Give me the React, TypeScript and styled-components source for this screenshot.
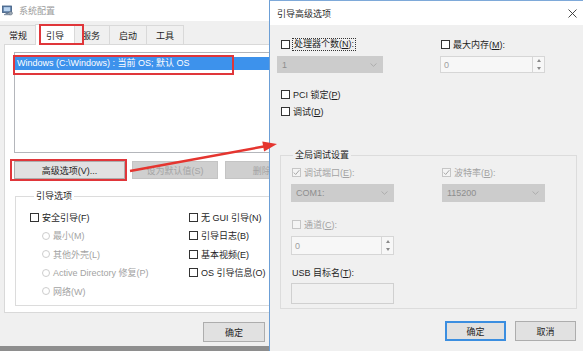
import styled, { createGlobalStyle } from "styled-components";

//Global
const GlobalStyle = createGlobalStyle`
  *, *::before, *::after { box-sizing: border-box; }
  html, body { margin: 0; padding: 0; }
  body {
    font-family: "Liberation Sans", "Noto Sans CJK SC", sans-serif;
    font-size: 9px;
    color: #1e1e1e;
  }
`;

//Desktop
const Desktop = styled.div`
  position: relative;
  width: 583px;
  height: 351px;
  overflow: hidden;
  background: #8e8e8e;
`;

//Main window
const MainWindow = styled.section`
  position: absolute;
  left: 0;
  top: 0;
  width: 484px;
  height: 346px;
  display: flex;
  flex-direction: column;
  background: #f0f0f0;
`;

const TitleBar = styled.header`
  height: 21px;
  display: flex;
  align-items: center;
  gap: 6px;
  padding-left: 2px;
  background: #fff;
  color: #9b9b9b;
`;

const TabStrip = styled.div`
  position: relative;
  z-index: 1;
  height: 23px;
  display: flex;
  align-items: flex-end;
  padding-left: 0;
`;

const Tab = styled.div<{ $active?: boolean }>`
  position: relative;
  height: ${(p) => (p.$active ? 21 : 19)}px;
  margin: 0 ${(p) => (p.$active ? -2 : 0)}px ${(p) => (p.$active ? -1 : 0)}px ${(p) => (p.$active ? -2 : -1)}px;
  padding: 0 ${(p) => (p.$active ? 10 : 9)}px;
  z-index: ${(p) => (p.$active ? 1 : 0)};
  display: flex;
  align-items: center;
  background: ${(p) => (p.$active ? "#fff" : "#f0f0f0")};
  border: 1px solid #d9d9d9;
  border-bottom: none;
`;

const TabPanel = styled.div`
  flex: 1;
  margin: 0 4px;
  padding: 7px 9px 0;
  display: flex;
  flex-direction: column;
  background: #fff;
  border: 1px solid #d9d9d9;
`;

const ListBox = styled.div`
  height: 101px;
  padding-top: 4px;
  border: 1px solid #b4b6bb;
  background: #fff;
`;

const ListItem = styled.div`
  position: relative;
  height: 13px;
  padding-left: 2px;
  line-height: 13px;
  color: #fff;
  background: #3d92ec;
`;

const Mark = styled.span<{ $t: number; $r: number; $b: number; $l: number }>`
  position: absolute;
  top: ${(p) => p.$t}px;
  right: ${(p) => p.$r}px;
  bottom: ${(p) => p.$b}px;
  left: ${(p) => p.$l}px;
  border: 2px solid #e0363a;
  pointer-events: none;
`;

const ButtonRow = styled.div`
  display: flex;
  gap: 7px;
  margin-top: 8px;
`;

const Button = styled.div<{ $w: number; $primary?: boolean; $disabled?: boolean }>`
  position: relative;
  width: ${(p) => p.$w}px;
  height: ${(p) => (p.$primary !== undefined ? 20 : 18)}px;
  flex: none;
  display: flex;
  align-items: center;
  justify-content: center;
  background: ${(p) => (p.$disabled ? "#cfcfcf" : "#e1e1e1")};
  border: ${(p) => (p.$primary ? "2px solid #3b8ee0" : p.$disabled ? "1px solid #c4c4c4" : "1px solid #adadad")};
  color: ${(p) => (p.$disabled ? "#a4a4a4" : "#1e1e1e")};
`;

const GroupBox = styled.fieldset<{ $mt: number; $ml: number; $w?: number; $pl: number; $pt: number }>`
  margin: ${(p) => p.$mt}px 0 0 ${(p) => p.$ml}px;
  width: ${(p) => (p.$w ? `${p.$w}px` : "auto")};
  min-width: 0;
  padding: ${(p) => p.$pt}px 0 4px ${(p) => p.$pl}px;
  border: 1px solid #dcdcdc;
`;

const Legend = styled.legend<{ $ml: number }>`
  margin-left: ${(p) => p.$ml}px;
  padding: 0 2px;
  line-height: 11px;
  color: #1e1e1e;
`;

const OptionGrid = styled.div`
  display: grid;
  grid-template-columns: 159px 1fr;
  grid-auto-rows: 18.5px;
  align-items: center;
`;

const Option = styled.label<{ $indent?: number; $disabled?: boolean; $mt?: number }>`
  height: 12px;
  margin-top: ${(p) => p.$mt ?? 0}px;
  padding-left: ${(p) => p.$indent ?? 0}px;
  display: flex;
  align-items: center;
  gap: 3px;
  white-space: nowrap;
  color: ${(p) => (p.$disabled ? "#a3a3a3" : "#1e1e1e")};
`;

const CheckBox = styled.span<{ $disabled?: boolean }>`
  width: 9px;
  height: 9px;
  flex: none;
  display: flex;
  align-items: center;
  justify-content: center;
  border: 1px solid ${(p) => (p.$disabled ? "#c6c6c6" : "#333")};
  background: ${(p) => (p.$disabled ? "#f4f4f4" : "#fff")};
`;

const Radio = styled.span`
  width: 8px;
  height: 8px;
  flex: none;
  border: 1px solid #cdcdcd;
  border-radius: 50%;
  background: #fff;
`;

const Footer = styled.footer`
  height: 33px;
  display: flex;
  justify-content: flex-end;
  gap: 7px;
  padding: 9px 12px 0 0;
`;

//Dialog
const Dialog = styled.section`
  position: absolute;
  z-index: 2;
  left: 269px;
  top: 0;
  width: 319px;
  height: 351px;
  display: flex;
  flex-direction: column;
  background: #f0f0f0;
  border-top: 1px solid #7ea9d9;
  border-left: 1px solid #6c9fd6;
`;

const DialogTitle = styled.header`
  height: 24px;
  flex: none;
  display: flex;
  align-items: center;
  justify-content: space-between;
  padding: 0 11px 0 7px;
  background: #fff;
  color: #2a2a2a;
`;

const DialogBody = styled.div`
  display: flex;
  flex-direction: column;
  padding-left: 7px;
`;

const PairRow = styled.div<{ $mt: number; $col: number }>`
  display: grid;
  grid-template-columns: ${(p) => p.$col}px 1fr;
  align-items: center;
  margin-top: ${(p) => p.$mt}px;
`;

const FocusText = styled.span`
  padding: 0 1px;
  outline: 1px dotted #333;
  line-height: 11px;
`;

const Select = styled.div<{ $w: number; $h: number; $mt?: number }>`
  width: ${(p) => p.$w}px;
  height: ${(p) => p.$h}px;
  margin-top: ${(p) => p.$mt ?? 0}px;
  display: flex;
  align-items: center;
  justify-content: space-between;
  padding: 0 5px 0 4px;
  background: #cccccc;
  border: 1px solid #cccccc;
  color: #8e8e8e;
`;

const SpinBox = styled.div<{ $w: number; $h: number; $mt?: number }>`
  width: ${(p) => p.$w}px;
  height: ${(p) => p.$h}px;
  margin-top: ${(p) => p.$mt ?? 0}px;
  display: flex;
  background: #f7f7f7;
  border: 1px solid #d6d6d6;
  color: #a0a0a0;
`;

const SpinValue = styled.span`
  flex: 1;
  display: flex;
  align-items: center;
  padding-left: 3px;
`;

const SpinArrows = styled.span`
  width: 12px;
  display: flex;
  flex-direction: column;
  border-left: 1px solid #d6d6d6;
`;

const SpinArrow = styled.span`
  flex: 1;
  display: flex;
  align-items: center;
  justify-content: center;
`;

const FieldLabel = styled.div<{ $mt: number }>`
  height: 12px;
  margin-top: ${(p) => p.$mt}px;
  padding-left: 1px;
  line-height: 12px;
  white-space: nowrap;
`;

const TextBox = styled.div<{ $w: number; $h: number; $mt: number }>`
  width: ${(p) => p.$w}px;
  height: ${(p) => p.$h}px;
  margin-top: ${(p) => p.$mt}px;
  background: #f0f0f0;
  border: 1px solid #d0d0d0;
`;

const DialogFooter = styled.footer`
  display: flex;
  justify-content: flex-end;
  gap: 9px;
  margin-top: 12px;
  padding-right: 12px;
`;

//Annotation
const Overlay = styled.svg`
  position: absolute;
  z-index: 5;
  left: 0;
  top: 0;
  pointer-events: none;
`;

const Key = styled.u`
  text-underline-offset: 1px;
`;

const Check = () => (
  <svg width="7" height="7" viewBox="0 0 7 7">
    <path d="M0.8 3.6 L2.7 5.5 L6.3 1.2" fill="none" stroke="#a6a6a6" strokeWidth="1" />
  </svg>
);

const Chevron = () => (
  <svg width="7" height="4" viewBox="0 0 7 4">
    <path d="M0.5 0.5 L3.5 3.3 L6.5 0.5" fill="none" stroke="#a9a9a9" strokeWidth="0.9" />
  </svg>
);

const Spinner = () => (
  <SpinArrows>
    <SpinArrow>
      <svg width="4" height="3" viewBox="0 0 4 3"><path d="M0 3 L2 0 L4 3 Z" fill="#8a8a8a" /></svg>
    </SpinArrow>
    <SpinArrow>
      <svg width="4" height="3" viewBox="0 0 4 3"><path d="M0 0 L2 3 L4 0 Z" fill="#8a8a8a" /></svg>
    </SpinArrow>
  </SpinArrows>
);

const AppIcon = () => (
  <svg width="11" height="11" viewBox="0 0 11 11">
    <rect x="0.5" y="1" width="9" height="6.5" fill="#5c7ea6" stroke="#3c5a80" strokeWidth="0.8" />
    <rect x="1.8" y="2.2" width="6.4" height="4" fill="#b9d3ef" />
    <rect x="3.5" y="7.5" width="3" height="1.5" fill="#6b7f95" />
    <rect x="2" y="9" width="6" height="1.2" fill="#8594a6" />
    <circle cx="8.6" cy="8.2" r="1.8" fill="#9aa7b5" stroke="#66727f" strokeWidth="0.6" />
  </svg>
);

const CloseIcon = () => (
  <svg width="9" height="9" viewBox="0 0 9 9">
    <path d="M0.5 0.5 L8.5 8.5 M8.5 0.5 L0.5 8.5" stroke="#333" strokeWidth="0.9" />
  </svg>
);

const App = () => {
  return (
    <>
      <GlobalStyle />
      <Desktop>
        <MainWindow>
          <TitleBar>
            <AppIcon />
            <span>系统配置</span>
          </TitleBar>
          <TabStrip>
            <Tab>常规</Tab>
            <Tab $active>
              引导
              <Mark $t={-1} $r={-10} $b={0} $l={3} />
            </Tab>
            <Tab>服务</Tab>
            <Tab>启动</Tab>
            <Tab>工具</Tab>
          </TabStrip>
          <TabPanel>
            <ListBox>
              <ListItem>
                Windows (C:\Windows) : 当前 OS; 默认 OS
                <Mark $t={-2} $r={235} $b={-5} $l={-2} />
              </ListItem>
            </ListBox>
            <ButtonRow>
              <Button $w={111}>
                高级选项(V)...
                <Mark $t={-3} $r={-3} $b={-3} $l={-5} />
              </Button>
              <Button $w={86} $disabled>设为默认值(S)</Button>
              <Button $w={86} $disabled>删除(D)</Button>
            </ButtonRow>
            <GroupBox $mt={12} $ml={1} $pl={14} $pt={6}>
              <Legend $ml={4}>引导选项</Legend>
              <OptionGrid>
                <Option><CheckBox /><span>安全引导(F)</span></Option>
                <Option><CheckBox /><span>无 GUI 引导(N)</span></Option>
                <Option $indent={12} $disabled><Radio /><span>最小(M)</span></Option>
                <Option><CheckBox /><span>引导日志(B)</span></Option>
                <Option $indent={12} $disabled><Radio /><span>其他外壳(L)</span></Option>
                <Option><CheckBox /><span>基本视频(E)</span></Option>
                <Option $indent={12} $disabled><Radio /><span>Active Directory 修复(P)</span></Option>
                <Option><CheckBox /><span>OS 引导信息(O)</span></Option>
                <Option $indent={12} $disabled><Radio /><span>网络(W)</span></Option>
              </OptionGrid>
            </GroupBox>
          </TabPanel>
          <Footer>
            <Button $w={62} $primary={false}>确定</Button>
            <Button $w={62} $primary={false}>取消</Button>
            <Button $w={62} $primary={false}>应用(A)</Button>
            <Button $w={62} $primary={false}>帮助</Button>
          </Footer>
        </MainWindow>

        <Dialog>
          <DialogTitle>
            <span>引导高级选项</span>
            <CloseIcon />
          </DialogTitle>
          <DialogBody>
            <PairRow $mt={13} $col={163}>
              <Option $indent={4}>
                <CheckBox />
                <FocusText>处理器个数(<Key>N</Key>):</FocusText>
              </Option>
              <Option $indent={1}><CheckBox /><span>最大内存(<Key>M</Key>):</span></Option>
            </PairRow>
            <PairRow $mt={6} $col={163}>
              <Select $w={106} $h={17}>1<Chevron /></Select>
              <SpinBox $w={105} $h={17}><SpinValue>0</SpinValue><Spinner /></SpinBox>
            </PairRow>
            <Option $indent={4} $mt={15}><CheckBox /><span>PCI 锁定(<Key>P</Key>)</span></Option>
            <Option $indent={4} $mt={5}><CheckBox /><span>调试(<Key>D</Key>)</span></Option>
            <GroupBox $mt={33} $ml={3} $w={297} $pl={10} $pt={4}>
              <Legend $ml={2}>全局调试设置</Legend>
              <PairRow $mt={1} $col={151}>
                <Option $indent={1} $disabled><CheckBox $disabled><Check /></CheckBox><span>调试端口(<Key>E</Key>):</span></Option>
                <Option $indent={0} $disabled><CheckBox $disabled><Check /></CheckBox><span>波特率(<Key>B</Key>):</span></Option>
              </PairRow>
              <PairRow $mt={6} $col={151}>
                <Select $w={103} $h={18}>COM1:<Chevron /></Select>
                <Select $w={103} $h={18}>115200<Chevron /></Select>
              </PairRow>
              <Option $indent={1} $mt={16} $disabled><CheckBox $disabled /><span>通道(<Key>C</Key>):</span></Option>
              <SpinBox $w={103} $h={19} $mt={6}><SpinValue>0</SpinValue><Spinner /></SpinBox>
              <FieldLabel $mt={12}>USB 目标名(<Key>T</Key>):</FieldLabel>
              <TextBox $w={103} $h={21} $mt={4} />
            </GroupBox>
            <DialogFooter>
              <Button $w={61} $primary>确定</Button>
              <Button $w={61} $primary={false}>取消</Button>
            </DialogFooter>
          </DialogBody>
        </Dialog>

        <Overlay width="583" height="351" viewBox="0 0 583 351">
          <line x1="130" y1="171" x2="265" y2="146.3" stroke="#e5352f" strokeWidth="2.4" />
          <polygon points="277,144 264.1,151.4 262.3,141.6" fill="#e5352f" />
        </Overlay>
      </Desktop>
    </>
  );
};

export default App;
